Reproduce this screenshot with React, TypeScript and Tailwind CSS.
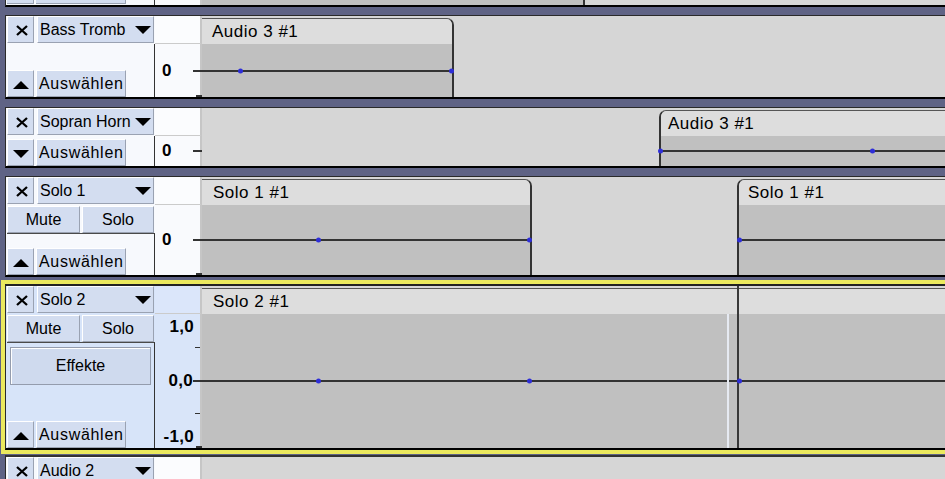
import type { ReactNode } from "react"

type Clip = { box: string; head: string; title: string }

type TrackDef = {
  name: string
  height: string
  muteSolo?: boolean
  effekte?: boolean
  selected?: boolean
  collapsed?: boolean
  scale?: boolean
  bottomTick?: boolean
  clips: Clip[]
  points: number[]
  split?: boolean
}

const tracks: TrackDef[] = [
  {
    name: "Bass Tromb",
    height: "h-[81px]",
    bottomTick: true,
    clips: [
      {
        box: "left-0 w-[252px] border-r-2 border-r-[#333] rounded-tr-[7px]",
        head: "rounded-tr-[6px] pl-[10px]",
        title: "Audio 3 #1",
      },
    ],
    points: [240, 451],
  },
  {
    name: "Sopran Horn",
    height: "h-[58px]",
    collapsed: true,
    clips: [
      {
        box: "left-[457px] -right-[4px] border-l-2 border-l-[#333] rounded-tl-[7px]",
        head: "rounded-tl-[6px] pl-[7px]",
        title: "Audio 3 #1",
      },
    ],
    points: [660, 872],
  },
  {
    name: "Solo 1",
    height: "h-[98px]",
    muteSolo: true,
    bottomTick: true,
    clips: [
      {
        box: "left-0 w-[330px] border-r-2 border-r-[#333] rounded-tr-[7px]",
        head: "rounded-tr-[6px] pl-[11px]",
        title: "Solo 1 #1",
      },
      {
        box: "left-[535px] -right-[4px] border-l-2 border-l-[#333] rounded-tl-[7px]",
        head: "rounded-tl-[6px] pl-[9px]",
        title: "Solo 1 #1",
      },
    ],
    points: [318, 529, 739],
  },
  {
    name: "Solo 2",
    height: "h-[162px]",
    muteSolo: true,
    effekte: true,
    selected: true,
    scale: true,
    bottomTick: true,
    split: true,
    clips: [
      {
        box: "left-0 -right-[4px]",
        head: "pl-[11px]",
        title: "Solo 2 #1",
      },
    ],
    points: [318, 529, 739],
  },
]

const font = "font-['Liberation_Sans',Arial,sans-serif]"

function Btn({ className = "", children }: { className?: string; children?: ReactNode }) {
  return (
    <div
      className={`flex shrink-0 items-center overflow-hidden whitespace-nowrap border border-b-[#9aa2b2] border-l-white border-r-[#9aa2b2] border-t-white bg-[#d3ddf0] text-[16px] leading-none text-black ${className}`}
    >
      {children}
    </div>
  )
}

const CloseIcon = () => (
  <svg width="12" height="11" viewBox="0 0 12 11" className="translate-x-[1px] translate-y-[1px]">
    <path d="M1 1 L11 10 M11 1 L1 10" stroke="#000" strokeWidth="2.3" />
  </svg>
)

const TriDown = () => (
  <svg width="16" height="8" viewBox="0 0 16 8">
    <path d="M0 0 H16 L8 8 Z" fill="#000" />
  </svg>
)

const TriUp = () => (
  <svg width="16" height="8" viewBox="0 0 16 8">
    <path d="M0 8 H16 L8 0 Z" fill="#000" />
  </svg>
)

function Ruler({ t }: { t: TrackDef }) {
  const bg = t.selected ? "bg-[#d9e5f9]" : "bg-[#f9fafd]"
  return (
    <div className={`relative flex-1 border-r-2 border-r-[#c6c6c6] ${bg}`}>
      {t.scale ? (
        <>
          <span className="absolute right-[6px] top-[4px] text-[17px] font-bold leading-[18px] tracking-[0.3px]">1,0</span>
          <span className="absolute right-[7px] top-1/2 -translate-y-1/2 text-[17px] font-bold leading-[18px] tracking-[0.3px]">
            0,0
          </span>
          <span className="absolute bottom-[2px] right-[6px] text-[17px] font-bold leading-[18px] tracking-[0.3px]">-1,0</span>
          <div className="absolute right-0 top-[33px] h-px w-[5px] bg-[#333]" />
          <div className="absolute right-0 top-[99px] h-px w-[5px] bg-[#333]" />
        </>
      ) : (
        <span className="absolute left-[7px] top-1/2 -translate-y-1/2 text-[17px] font-bold leading-[18px]">0</span>
      )}
      <div className="absolute -right-[2px] top-1/2 h-[2px] w-[9px] -translate-y-1/2 bg-[#333]" />
      {t.bottomTick ? <div className="absolute -right-[2px] bottom-0 h-[2px] w-[6px] bg-[#333]" /> : null}
    </div>
  )
}

function Track({ t }: { t: TrackDef }) {
  const panelBg = t.selected ? "bg-[#d7e4f9]" : "bg-[#f7f9fd]"
  const topCell = t.selected ? "bg-[#dbe6fa]" : "bg-[#fbfcfe]"

  return (
    <div className={`flex ${t.height} shrink-0`}>
      <div className={`flex w-[196px] shrink-0 flex-col ${panelBg}`}>
        <div className="flex h-[28px] shrink-0 items-start pl-px">
          <Btn className="h-[27px] w-[27px] justify-center">
            <CloseIcon />
          </Btn>
          <Btn className="ml-[3px] h-[27px] w-[117px] justify-between pl-[2px] pr-[2px]">
            <span>{t.name}</span>
            <TriDown />
          </Btn>
          <div className={`ml-px h-[28px] w-[47px] border-b border-r-2 border-b-[#cbcbcb] border-r-[#c6c6c6] ${topCell}`} />
        </div>

        <div className="flex flex-1">
          <div className="flex w-[149px] shrink-0 flex-col pl-px">
            {t.muteSolo ? (
              <div className="flex h-[28px] shrink-0 gap-[2px] pt-px">
                <Btn className="h-[27px] w-[73px] justify-center">Mute</Btn>
                <Btn className="h-[27px] w-[72px] justify-center">Solo</Btn>
              </div>
            ) : null}
            <div
              className={`flex flex-1 flex-col border-r border-r-[#333] ${
                t.muteSolo ? "border-t border-t-[#4a4a4a]" : ""
              } ${t.effekte ? "justify-between" : "justify-end"}`}
            >
              {t.effekte ? (
                <div className="ml-[3px] mt-[4px] flex h-[38px] w-[141px] items-center justify-center border border-[#949cad] bg-[#cfdaee] text-[16px] shadow-[inset_1px_1px_0_#ffffff]">
                  Effekte
                </div>
              ) : null}
              <div className="flex gap-[2px]">
                <Btn className="h-[27px] w-[27px] justify-center pt-[3px]">
                  {t.collapsed ? <TriDown /> : <TriUp />}
                </Btn>
                <Btn className="h-[27px] w-[90px] pl-[2px] tracking-[0.7px]">Auswählen</Btn>
              </div>
            </div>
          </div>
          <Ruler t={t} />
        </div>
      </div>

      <div className="relative flex-1 overflow-hidden bg-[#d6d6d6]">
        {t.clips.map((c, i) => (
          <div key={i} className={`absolute bottom-0 top-[2px] flex flex-col border-t border-t-[#555] ${c.box}`}>
            <div className={`h-[25px] shrink-0 whitespace-nowrap bg-[#dddddd] text-[17px] leading-[25px] tracking-[0.5px] ${c.head}`}>
              {c.title}
            </div>
            <div className="relative flex-1 bg-[#c0c0c0]">
              <div className="absolute left-0 right-0 top-1/2 h-[2px] -translate-y-1/2 bg-[#333]" />
            </div>
          </div>
        ))}

        {t.split ? (
          <>
            <div className="absolute bottom-0 left-[525px] top-[28px] w-[2px] bg-[#e6eaf2]" />
            <div className="absolute bottom-0 left-[535px] top-0 w-[2px] bg-[#383838]" />
          </>
        ) : null}

        {t.points.map((x) => (
          <div
            key={x}
            className="absolute top-[calc(50%+14px)] h-[5px] w-[5px] -translate-y-1/2 rounded-full bg-[#2e2ed8]"
            style={{ left: x - 204 }}
          />
        ))}
      </div>
    </div>
  )
}

export default function App() {
  const [t1, t2, t3, t4] = tracks

  return (
    <div className={`flex h-[479px] w-[945px] flex-col overflow-hidden bg-[#5f6385] text-black ${font}`}>
      {/* tail of the track above */}
      <div className="ml-[5px] flex h-[7px] shrink-0 border-b-2 border-l border-b-black border-l-[#2a2a2a]">
        <div className="flex w-[196px] shrink-0 bg-[#f7f9fd]">
          <div className="flex w-[149px] shrink-0 pl-px">
            <div className="flex flex-1 gap-[2px] border-r border-r-[#333]">
              <div className="h-[4px] w-[27px] border-b border-r border-[#9aa2b2] bg-[#d3ddf0]" />
              <div className="h-[4px] w-[90px] border-b border-r border-[#9aa2b2] bg-[#d3ddf0]" />
            </div>
          </div>
          <div className="flex-1 border-r-2 border-r-[#c6c6c6] bg-[#f9fafd]" />
        </div>
        <div className="relative flex-1 bg-[#d6d6d6]">
          <div className="absolute bottom-0 left-0 top-0 w-[383px] border-r-2 border-r-[#333] bg-[#c0c0c0]" />
        </div>
      </div>

      <div className="ml-[5px] mt-[8px] shrink-0 border-b-2 border-l border-t border-b-black border-l-[#2a2a2a] border-t-[#2a2a2a]">
        <Track t={t1} />
      </div>
      <div className="ml-[5px] mt-[8px] shrink-0 border-b-2 border-l border-t border-b-black border-l-[#2a2a2a] border-t-[#2a2a2a]">
        <Track t={t2} />
      </div>
      <div className="ml-[5px] mt-[8px] shrink-0 border-b-2 border-l border-t border-b-black border-l-[#2a2a2a] border-t-[#2a2a2a]">
        <Track t={t3} />
      </div>

      {/* selected track */}
      <div className="ml-px mt-[3px] shrink-0 border-4 border-r-0 border-[#ebe95e]">
        <div className="border-b-2 border-l border-t-2 border-b-black border-l-[#2a2a2a] border-t-[#222]">
          <Track t={t4} />
        </div>
      </div>

      {/* next track, cut off */}
      <div className="ml-[5px] mt-px flex flex-1 border-l border-t-2 border-l-[#2a2a2a] border-t-[#333]">
        <div className="flex w-[196px] shrink-0 flex-col bg-[#f7f9fd]">
          <div className="flex h-[28px] shrink-0 items-start pl-px">
            <Btn className="h-[27px] w-[27px] justify-center">
              <CloseIcon />
            </Btn>
            <Btn className="ml-[3px] h-[27px] w-[117px] justify-between pl-[2px] pr-[2px]">
              <span>Audio 2</span>
              <TriDown />
            </Btn>
            <div className="ml-px h-[28px] w-[47px] border-r-2 border-r-[#c6c6c6] bg-[#fbfcfe]" />
          </div>
        </div>
        <div className="flex-1 bg-[#d6d6d6]" />
      </div>
    </div>
  )
}
